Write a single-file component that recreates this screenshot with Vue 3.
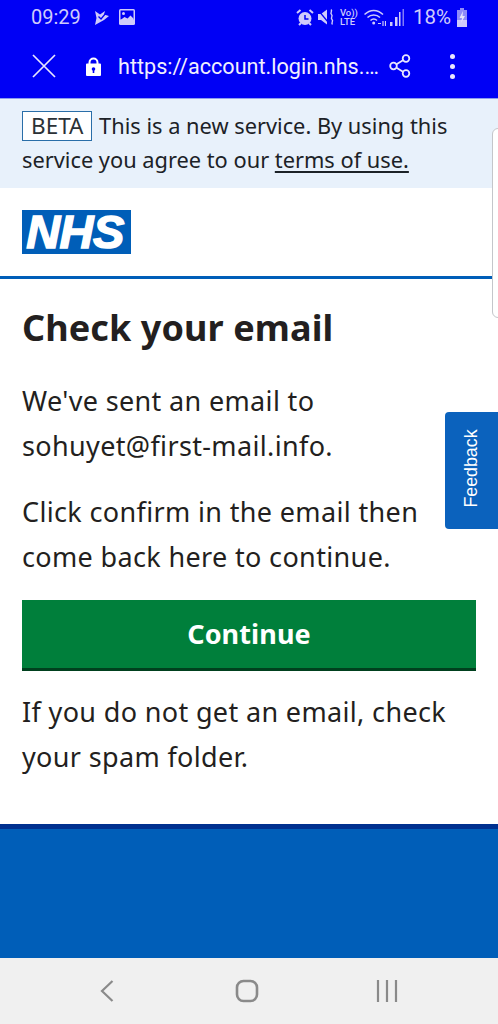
<script setup>
const title = 'Check your email'
const email = 'sohuyet@first-mail.info'
</script>

<template>
  <div class="phone">
    <!-- browser chrome -->
    <div class="chrome">
      <div class="status">
        <span class="time">09:29</span>
        <svg class="st-ico" width="15" height="15" viewBox="0 0 15 15"><path d="M1 1l5 3.500L11 1l-1 3.500 5 1.500-5 4-9 5 1.500-7z" fill="#cfcbfb"/><path d="M4.500 6.500L7 9l5-6" stroke="#0000f5" stroke-width="1.300" fill="none"/></svg>
        <svg class="st-ico pic" width="16" height="16" viewBox="0 0 16 16"><rect width="16" height="16" rx="1.500" fill="#cfcbfb"/><rect x="1.500" y="1.500" width="13" height="9" fill="#0000f5"/><circle cx="4.500" cy="4.500" r="1.500" fill="#cfcbfb"/><path d="M1.500 11l4-3 3 1.500 3-3 3 3V14.500h-13z" fill="#cfcbfb"/></svg>
        <span class="spacer"></span>
        <svg class="st-ico" width="18" height="17" viewBox="0 0 18 17"><circle cx="9" cy="9.500" r="6.500" fill="#cfcbfb"/><path d="M9 6v4h3.500" stroke="#0000f5" stroke-width="1.500" fill="none"/><path d="M1 4l3.500-3M17 4l-3.500-3M3 16l2-2M15 16l-2-2" stroke="#cfcbfb" stroke-width="2"/></svg>
        <svg class="st-ico mute" width="17" height="16" viewBox="0 0 17 16"><path d="M0 5h3l6-4.500v15L3 11H0z" fill="#cfcbfb"/><path d="M0 1l10 12" stroke="#0000f5" stroke-width="1.200"/><path d="M13 0.500c2 2-1.500 3 .5 5s-1.500 3 .5 5-1.500 3 .5 5" stroke="#cfcbfb" stroke-width="1.400" fill="none"/></svg>
        <span class="volte"><span>Vo))</span><span>LTE</span></span>
        <svg class="st-ico wifi" width="22" height="17" viewBox="0 0 22 17"><g stroke="#cfcbfb" stroke-width="1.500" fill="none"><path d="M0.500 5.500c5.500-5.500 13-5.500 18.500 0"/><path d="M3.500 8.500c3.500-3.500 9-3.500 12.500 0"/><path d="M6.500 11.500c2-2 4.500-2 6.500 0"/></g><circle cx="9.700" cy="14" r="1.500" fill="#cfcbfb"/><path d="M14 14.500h3M19 17v-5M21.500 17v-5" stroke="#cfcbfb" stroke-width="1.200"/></svg>
        <svg class="st-ico sig" width="14" height="17" viewBox="0 0 14 17"><path d="M0 13h2.500v4H0zM5 8h2.500v9H5zM9 3h1.500v14H9z" fill="#cfcbfb"/><path d="M12.500 0H14v17h-1.500z" fill="#7f7bf8"/></svg>
        <span class="pct">18%</span>
        <svg class="st-ico batt" width="12" height="19" viewBox="0 0 12 19"><path d="M4 0h4v2h3v17H1V2h3z" fill="#8f8bf9"/><path d="M1 12h10v7H1z" fill="#cfcbfb"/><path d="M7 3L3.500 10H6l-1 5 4-7H6.500z" fill="#e6e4fd"/></svg>
      </div>
      <div class="toolbar">
        <svg class="close" width="24" height="24" viewBox="0 0 24 24"><path d="M1 1l22 22M23 1L1 23" stroke="#e8e6fe" stroke-width="1.700" fill="none"/></svg>
        <svg class="lock" width="17" height="19" viewBox="0 0 17 19"><path d="M4.500 8V5.500a4 4 0 0 1 8 0V8" stroke="#fff" stroke-width="2" fill="none"/><path d="M1 7.500a1 1 0 0 1 1-1h13a1 1 0 0 1 1 1V18a1 1 0 0 1-1 1H2a1 1 0 0 1-1-1z" fill="#fff"/><circle cx="8.500" cy="12" r="1.800" fill="#0000f5"/><rect x="7.700" y="12" width="1.600" height="4" fill="#0000f5"/></svg>
        <span class="url">https://account.login.nhs.…</span>
        <svg class="share" width="22" height="24" viewBox="0 0 22 24"><g stroke="#e8e6fe" stroke-width="1.800" fill="none"><circle cx="17" cy="4.500" r="3.300"/><circle cx="4.500" cy="12" r="3.300"/><circle cx="17" cy="19.500" r="3.300"/><path d="M7.500 10.300l6.500-4M7.500 13.700l6.500 4"/></g></svg>
        <span class="dots"><i></i><i></i><i></i></span>
      </div>
    </div>

    <!-- beta banner -->
    <div class="banner">
      <p><span class="tag">BETA</span> This is a new service. By using this<br>service you agree to our <a class="terms">terms of use.</a></p>
    </div>

    <!-- nhs header -->
    <div class="header">
      <div class="logo"><span>NHS</span></div>
    </div>

    <main class="content">
      <h1>{{ title }}</h1>
      <p>We've sent an email to<br>{{ email }}.</p>
      <p>Click confirm in the email then<br>come back here to continue.</p>
      <button class="btn">Continue</button>
      <p class="last">If you do not get an email, check<br>your spam folder.</p>
    </main>

    <div class="footer"></div>

    <!-- android nav -->
    <div class="nav">
      <svg width="16" height="24" viewBox="0 0 16 24"><path d="M13.500 2L3 12l10.500 10" stroke="#8a8a8a" stroke-width="2.200" fill="none"/></svg>
      <svg width="24" height="24" viewBox="0 0 24 24"><rect x="2" y="2" width="20" height="20" rx="6.500" stroke="#8a8a8a" stroke-width="2.600" fill="none"/></svg>
      <svg width="22" height="22" viewBox="0 0 22 22"><path d="M2 0v22M11 0v22M20 0v22" stroke="#8a8a8a" stroke-width="2.200"/></svg>
    </div>

    <!-- overlays -->
    <div class="edge-handle"></div>
    <div class="feedback"><span>Feedback</span></div>
  </div>
</template>

<style scoped>
.phone {
  position: relative;
  width: 498px;
  height: 1024px;
  display: flex;
  flex-direction: column;
  overflow: hidden;
  background: #fff;
  font-family: "Noto Sans", "Open Sans", sans-serif;
  color: #212b32;
}

.chrome {
  background: #0000f5;
  height: 98px;
  border-bottom: 1px solid #8c9cf0;
  flex: none;
}

.status {
  height: 34px;
  display: flex;
  align-items: center;
  padding-left: 31px;
  padding-right: 30px;
  color: #cfcbfb;
  font-family: Roboto, sans-serif;
}

.time {
  font-size: 20px;
  margin-right: 13px;
}

.pic {
  margin-left: 10px;
}

.spacer {
  flex: 1;
}

.mute {
  margin-left: 4px;
}

.volte {
  display: flex;
  flex-direction: column;
  width: 16px;
  font-size: 9.500px;
  line-height: 9px;
  margin-left: 5px;
  font-weight: 500;
  white-space: nowrap;
}

.wifi {
  margin-left: 8px;
}

.sig {
  margin-left: 4px;
}

.pct {
  font-size: 20.500px;
  margin-left: 9px;
  margin-right: 5px;
}

.toolbar {
  height: 64px;
  display: flex;
  align-items: center;
  padding-left: 32px;
}

.lock {
  margin-left: 29px;
}

.url {
  color: #f0effe;
  font-family: Roboto, sans-serif;
  font-size: 21.600px;
  margin-left: 16px;
  width: 264px;
  white-space: nowrap;
}

.share {
  margin-left: 7px;
}

.dots {
  display: flex;
  flex-direction: column;
  gap: 5px;
  margin-left: 39px;
}

.dots i {
  width: 5px;
  height: 5px;
  border-radius: 50%;
  background: #e8e6fe;
}

.banner {
  flex: none;
  height: 89px;
  background: #e8f1fb;
  padding: 10px 22px 0;
  box-sizing: border-box;
  font-size: 21.800px;
  line-height: 34px;
}

.banner p {
  margin: 0;
  white-space: nowrap;
  color: #1c2227;
}

.tag {
  display: inline-block;
  border: 1.500px solid #2a6ea8;
  background: #fff;
  line-height: 28px;
  padding: 0 8px;
  margin-right: 1px;
  font-size: 22.500px;
  color: #2b3136;
}

.terms {
  text-decoration: underline;
  text-underline-offset: 3px;
}

.header {
  flex: none;
  height: 91px;
  box-sizing: border-box;
  padding: 22px 22px 0;
  border-bottom: 3px solid #005eb8;
}

.logo {
  width: 109px;
  height: 44px;
  background: #005eb8;
  display: flex;
  align-items: center;
  justify-content: center;
}

.logo span {
  font-family: "Liberation Sans", Arial, sans-serif;
  font-weight: 700;
  font-style: italic;
  font-size: 47px;
  letter-spacing: -0.5px;
  color: #fff;
  line-height: 44px;
  -webkit-text-stroke: 1.500px #fff;
  margin-right: 3px;
}

.content {
  flex: none;
  height: 545px;
  box-sizing: border-box;
  padding: 27px 22px 0;
}

h1 {
  margin: 0 0 28px;
  font-size: 36px;
  line-height: 44px;
  font-weight: 700;
  letter-spacing: 0.1px;
  color: #231f20;
}

.content p {
  margin: 0 0 21px;
  font-size: 27px;
  line-height: 45px;
  letter-spacing: 0.35px;
  color: #231f20;
  white-space: nowrap;
}

.btn {
  display: block;
  width: 454px;
  height: 71px;
  margin: 0;
  border: none;
  border-bottom: 3px solid #00401e;
  background: #007f3b;
  color: #fff;
  font-family: inherit;
  font-size: 27px;
  letter-spacing: 0.1px;
  font-weight: 700;
  padding: 0 0 2px;
}

.content .last {
  margin-top: 18px;
}

.footer {
  flex: 1;
  background: #005eb8;
  border-top: 5px solid #00308f;
}

.nav {
  flex: none;
  height: 66px;
  background: #f0f0f0;
  display: flex;
  align-items: center;
  padding-left: 99px;
}

.nav svg:nth-child(2) {
  margin: 0 117px 0 120px;
}

.edge-handle {
  position: absolute;
  left: 492px;
  top: 128px;
  width: 12px;
  height: 190px;
  box-sizing: border-box;
  background: #fff;
  border: 1px solid #c4c6ca;
  border-radius: 6px;
}

.feedback {
  position: absolute;
  left: 445px;
  top: 412px;
  width: 60px;
  height: 117px;
  background: #0b62bd;
  border-radius: 4px;
  display: flex;
  align-items: center;
  justify-content: center;
}

.feedback span {
  color: #fff;
  font-family: "Liberation Sans", Arial, sans-serif;
  font-size: 17.800px;
  transform: rotate(-90deg) translate(2px, -4px);
}
</style>
